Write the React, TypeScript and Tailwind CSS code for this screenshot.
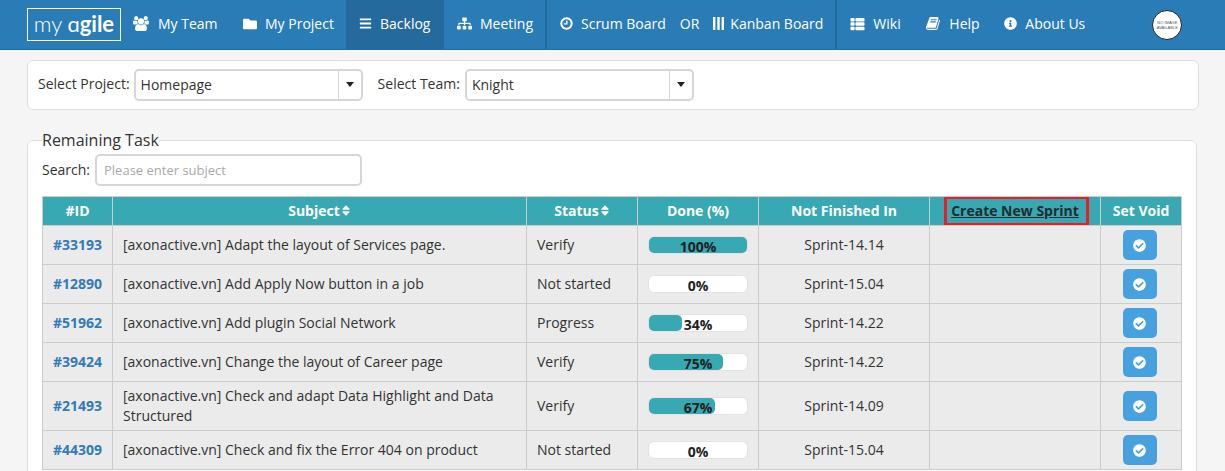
import { FaBars, FaCheckCircle, FaFolder, FaInfoCircle, FaSitemap, FaSort, FaThList } from "react-icons/fa"
import type { ReactNode } from "react"

const tasks = [
  { id: "#33193", subject: "[axonactive.vn] Adapt the layout of Services page.", status: "Verify", done: 100, sprint: "Sprint-14.14" },
  { id: "#12890", subject: "[axonactive.vn] Add Apply Now button in a job", status: "Not started", done: 0, sprint: "Sprint-15.04" },
  { id: "#51962", subject: "[axonactive.vn] Add plugin Social Network", status: "Progress", done: 34, sprint: "Sprint-14.22" },
  { id: "#39424", subject: "[axonactive.vn] Change the layout of Career page", status: "Verify", done: 75, sprint: "Sprint-14.22" },
  { id: "#21493", subject: "[axonactive.vn] Check and adapt Data Highlight and Data Structured", status: "Verify", done: 67, sprint: "Sprint-14.09" },
  { id: "#44309", subject: "[axonactive.vn] Check and fix the Error 404 on product", status: "Not started", done: 0, sprint: "Sprint-15.04" },
]

function UsersIcon() {
  return (
    <svg viewBox="0 0 1920 1792" className="h-[15px] w-[16px]" fill="currentColor">
      <path d="M593 896q-162 5-265 128h-134q-82 0-138-40.5t-56-118.5q0-353 124-353 6 0 43.5 21t97.5 42.5 119 21.5q67 0 133-23-5 37-5 66 0 139 81 256zm1071 637q0 120-73 189.5t-194 69.5h-874q-121 0-194-69.5t-73-189.5q0-53 3.5-103.5t14-109 26.5-108.5 43-97.5 62-81 85.5-53.5 111.5-20q10 0 43 21.5t73 48 107 48 135 21.5 135-21.5 107-48 73-48 43-21.5q61 0 111.5 20t85.5 53.5 62 81 43 97.5 26.5 108.5 14 109 3.5 103.5zm-1024-1277q0 106-75 181t-181 75-181-75-75-181 75-181 181-75 181 75 75 181zm704 384q0 159-112.5 271.5t-271.5 112.5-271.5-112.5-112.5-271.5 112.5-271.5 271.5-112.5 271.5 112.5 112.5 271.5zm576 225q0 78-56 118.5t-138 40.5h-134q-103-123-265-128 81-117 81-256 0-29-5-66 66 23 133 23 59 0 119-21.5t97.5-42.5 43.5-21q124 0 124 353zm-128-609q0 106-75 181t-181 75-181-75-75-181 75-181 181-75 181 75 75 181z" />
    </svg>
  )
}

function BookIcon() {
  return (
    <svg viewBox="0 0 1792 1792" className="h-[15px] w-[15px]" fill="currentColor">
      <path d="M1639 478q40 57 18 129l-275 906q-19 64-76.5 107.5t-122.5 43.5h-923q-77 0-148.5-53.5t-99.5-131.5q-24-67-2-127 0-4 3-27t4-37q1-8-3-21.5t-3-19.5q2-11 8-21t16.5-23.5 16.5-23.5q23-38 45-91.5t30-91.5q3-10 .5-30t-.5-28q3-11 17-28t17-23q21-36 42-92t25-90q1-9-2.5-32t.5-28q4-13 22-30.5t22-22.5q19-26 42.5-84.5t27.5-96.5q1-8-3-25.5t-2-26.5q2-8 9-18t18-23 17-21q8-12 16.5-30.5t15-35 16-36 19.5-32 26.5-23.5 36-11.5 47.5 5.5l-1 3q38-9 51-9h761q74 0 114 56t18 130l-274 906q-36 119-71.5 153.5t-128.5 34.5h-869q-27 0-38 15-11 16-1 43 24 70 144 70h923q29 0 56-15.5t35-41.5l300-987q7-22 5-57 38 15 59 43zm-1064 2q-4 13 2 22.5t20 9.5h608q13 0 25.5-9.5t16.5-22.5l21-64q4-13-2-22.5t-20-9.5h-608q-13 0-25.5 9.5t-16.5 22.5zm-83 256q-4 13 2 22.5t20 9.5h608q13 0 25.5-9.5t16.5-22.5l21-64q4-13-2-22.5t-20-9.5h-608q-13 0-25.5 9.5t-16.5 22.5z" />
    </svg>
  )
}

function ClockIcon() {
  return (
    <svg viewBox="0 0 13 13" className="h-[13px] w-[13px]" fill="none" stroke="currentColor">
      <circle cx="6.5" cy="6.5" r="5.2" strokeWidth="2" />
      <path d="M6.8 3.4v3.5H4" strokeWidth="1.4" />
    </svg>
  )
}

function KanbanIcon() {
  return (
    <svg viewBox="0 0 11 13" className="h-[13px] w-[11px]" fill="currentColor">
      <rect x="0" y="0" width="2.4" height="13" />
      <rect x="4.3" y="0" width="2.4" height="13" />
      <rect x="8.6" y="0" width="2.4" height="13" />
    </svg>
  )
}

function NavItem({ icon, label, className = "" }: { icon: ReactNode; label: string; className?: string }) {
  return (
    <a className={`flex h-full shrink-0 items-center gap-[8px] whitespace-nowrap pb-[2px] text-white ${className}`}>
      {icon}
      <span>{label}</span>
    </a>
  )
}

function SelectBox({ value, width }: { value: string; width: string }) {
  return (
    <div className={`flex h-[32px] items-center rounded-[5px] border-2 border-[#d6d6d6] bg-white ${width}`}>
      <span className="flex-1 pl-[5px] text-[14px] text-[#333]">{value}</span>
      <span className="flex h-full w-[23px] items-center justify-center border-l border-[#d6d6d6]">
        <span className="h-0 w-0 border-x-[4.5px] border-t-[5px] border-x-transparent border-t-[#222]" />
      </span>
    </div>
  )
}

function Progress({ value }: { value: number }) {
  return (
    <div className="relative mx-auto h-[18px] w-[100px] rounded-[6px] border border-[#e2e2e2] bg-white">
      <div className="h-full rounded-[5px] bg-[#38a8b2]" style={{ width: `${value}%` }} />
      <span className="absolute inset-x-0 top-0 h-[19px] text-center text-[14px] font-bold leading-[19px] text-[#222]">{value}%</span>
    </div>
  )
}

export default function App() {
  const cell = "border border-[#cbcbcb] px-[10px] leading-[20px]"
  const head = "border border-[#cbcbcb] pb-px text-center text-[14px] font-bold leading-[20px] text-white"
  return (
    <div className="h-[471px] overflow-hidden bg-[#f5f5f5] font-['Open_Sans',sans-serif] text-[14px] text-[#333]">
      <nav className="flex h-[50px] items-center border-b border-[#236a9e] bg-[#2a7cb6] pl-[27px] text-[14px]">
        <div className="flex h-[33px] w-[94px] shrink-0 items-center justify-center gap-[5px] border border-white pb-[2px] font-['Lato',sans-serif] text-[22px] leading-none text-white">
          <span className="font-light">my</span>
          <span className="font-bold"><span className="font-normal">ɑ</span>gile</span>
        </div>
        <NavItem className="ml-[12px] w-[110px] !gap-[9px]" icon={<UsersIcon />} label="My Team" />
        <NavItem className="w-[103px]" icon={<FaFolder className="h-[14px] w-[14px]" />} label="My Project" />
        <NavItem className="w-[98px] bg-[#246a9c] pl-[13px]" icon={<FaBars className="h-[13px] w-[13px]" />} label="Backlog" />
        <NavItem className="w-[103px] border-r-2 border-[#236a9e] pl-[13px]" icon={<FaSitemap className="h-[15px] w-[15px]" />} label="Meeting" />
        <NavItem className="ml-[13px]" icon={<ClockIcon />} label="Scrum Board" />
        <span className="ml-[14px] pb-[2px] text-white">OR</span>
        <NavItem className="ml-[14px] w-[122px] !gap-[6px]" icon={<KanbanIcon />} label="Kanban Board" />
        <NavItem className="w-[91px] border-l-2 border-[#236a9e] pl-[13px]" icon={<FaThList className="h-[14px] w-[15px]" />} label="Wiki" />
        <NavItem className="w-[78px]" icon={<BookIcon />} label="Help" />
        <NavItem className="w-[148px]" icon={<FaInfoCircle className="h-[13px] w-[13px]" />} label="About Us" />
        <div className="flex h-[30px] w-[30px] shrink-0 items-center justify-center rounded-full border border-[#222] bg-white text-center font-['Liberation_Sans',sans-serif] text-[4px] leading-[5px] text-[#555]">
          NO IMAGE<br />AVAILABLE
        </div>
      </nav>

      <section className="ml-[27px] mt-[10px] flex h-[50px] w-[1172px] items-center rounded-[6px] border border-[#dedede] bg-white pb-px pl-[10px]">
        <span className="mr-[4px] pb-[2px] text-[14px]">Select Project:</span>
        <SelectBox value="Homepage" width="w-[229px]" />
        <span className="ml-[15px] mr-[5px] pb-[2px]">Select Team:</span>
        <SelectBox value="Knight" width="w-[229px]" />
      </section>

      <fieldset className="ml-[27px] mt-[19px] h-[400px] w-[1170px] rounded-[6px] border border-[#dedede] bg-white px-[14px]">
        <legend className="text-[16px] leading-[22px] text-[#333]">Remaining Task</legend>
        <div className="mt-[3px] flex items-center gap-[5px]">
          <span className="pb-[2px]">Search:</span>
          <div className="flex h-[32px] w-[267px] items-center rounded-[5px] border-2 border-[#d6d6d6] pl-[7px] pt-px text-[13px] text-[#a9a9a9]">
            Please enter subject
          </div>
        </div>
        <table className="mt-[10px] w-[1139px] table-fixed border-collapse bg-[#ebebeb]">
          <colgroup>
            <col className="w-[70px]" />
            <col className="w-[414px]" />
            <col className="w-[111px]" />
            <col className="w-[121px]" />
            <col className="w-[171px]" />
            <col className="w-[171px]" />
            <col className="w-[81px]" />
          </colgroup>
          <thead>
            <tr className="h-[29px] bg-[#38a8b2]">
              <th className={head}>#ID</th>
              <th className={head}>
                <span className="inline-flex items-center gap-px">Subject<FaSort className="h-[13px] w-[10px]" /></span>
              </th>
              <th className={head}>
                <span className="inline-flex items-center gap-px">Status<FaSort className="h-[13px] w-[10px]" /></span>
              </th>
              <th className={head}>Done (%)</th>
              <th className={head}>Not Finished In</th>
              <th className="border border-[#cbcbcb] text-center text-[14px] font-bold leading-[20px]">
                <div className="-my-px ml-[14px] flex h-[30px] w-[145px] items-center justify-center border-[3px] border-[#ed1c24] pb-px pr-[3px] text-[#1f2d33] underline">
                  Create New Sprint
                </div>
              </th>
              <th className={head}>Set Void</th>
            </tr>
          </thead>
          <tbody>
            {tasks.map((t) => (
              <tr key={t.id} className={t.subject.length > 60 ? "h-[49px]" : "h-[39px]"}>
                <td className={`${cell} text-center font-bold text-[#337ab7]`}>{t.id}</td>
                <td className={cell}>{t.subject}</td>
                <td className={cell}>{t.status}</td>
                <td className={cell}><Progress value={t.done} /></td>
                <td className={`${cell} text-center`}>{t.sprint}</td>
                <td className={cell} />
                <td className={`${cell} !pr-[13px] text-center`}>
                  <button className="mx-auto flex h-[30px] w-[34px] items-center justify-center rounded-[5px] bg-[#47a1de] text-white">
                    <FaCheckCircle className="h-[13px] w-[13px]" />
                  </button>
                </td>
              </tr>
            ))}
          </tbody>
        </table>
      </fieldset>
    </div>
  )
}
